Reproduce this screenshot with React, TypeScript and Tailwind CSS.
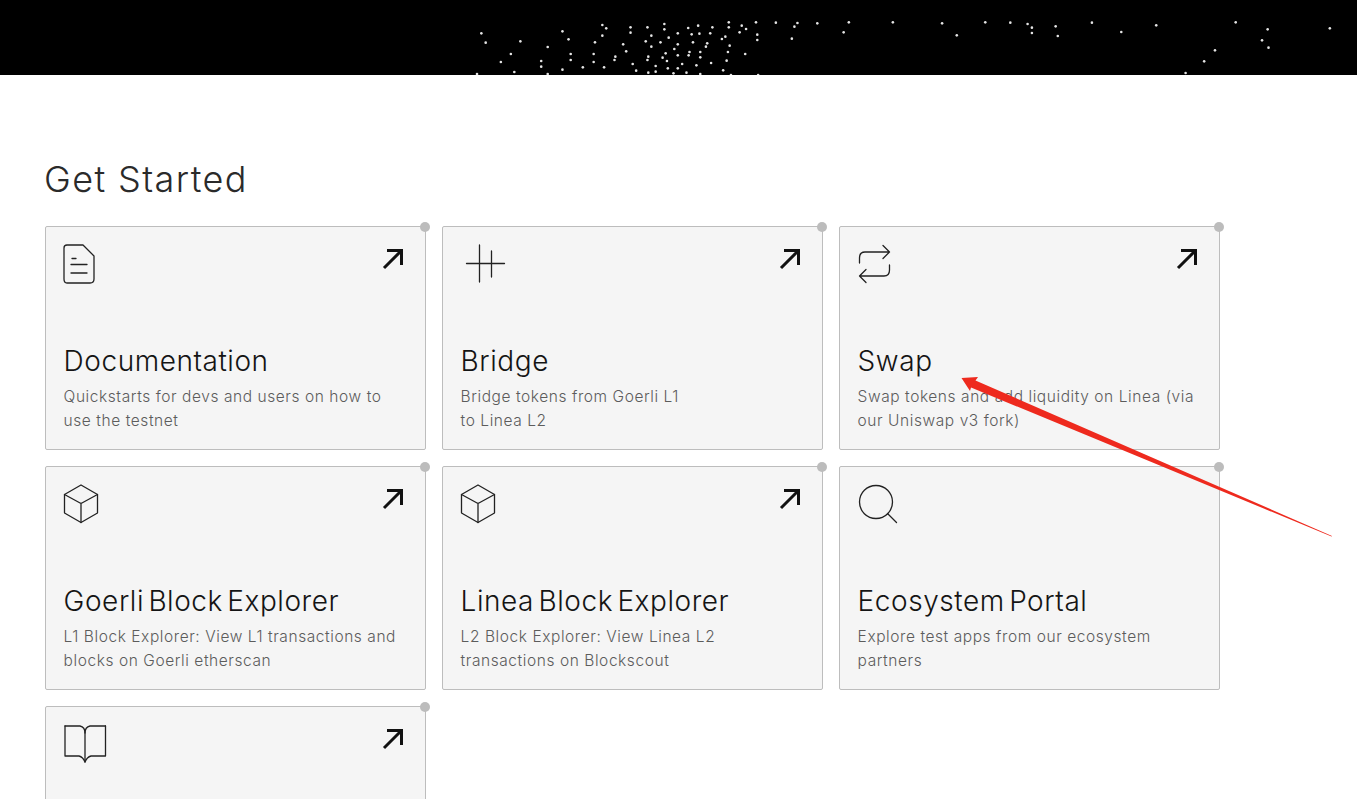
const dots1 = [[1110,100],[1120,128],[1200,124],[1178,162],[1155,186],[1100,222],[1186,216],[1297,94],[1311,118],[1263,141],[1248,183],[1248,200],[1263,222],[1316,162],[1316,180],[1297,209],[1344,202],[1369,162],[1369,186],[1393,202],[1372,127],[1389,75],[1398,85],[1389,107],[1437,133],[1444,154],[1419,170],[1417,180],[1454,82],[1454,98],[1493,82],[1502,107],[1489,124],[1502,140],[1523,127],[1542,113],[1532,72],[1532,88],[1563,100],[1563,133],[1555,147],[1535,160],[1563,166],[1528,173],[1495,170],[1493,180],[1538,183],[1459,192],[1467,212],[1495,218],[1512,215],[1512,198],[1540,205],[1563,205],[1553,220]];
const dots2 = [[19,84],[42,77],[75,82],[113,82],[143,77],[153,87],[27,103],[45,101],[70,100],[138,97],[179,104],[179,120],[105,110],[97,117],[30,127],[63,130],[60,140],[115,137],[22,156],[20,166],[47,156],[47,172],[111,156],[151,162],[108,182],[72,189],[38,196],[5,192],[100,211],[15,218],[47,222],[118,225],[181,225],[113,67],[176,67],[222,68],[265,80],[272,69],[259,116],[318,70],[391,67],[379,97],[493,67],[607,70],[641,106],[707,67],[765,68],[805,72],[815,83],[815,99],[870,79],[875,108],[954,68],[1022,96],[1103,76],[1287,67],[1361,88],[1348,121],[1363,143],[1239,151],[1214,184],[1171,219],[1505,85]];

const stroke = { fill: "none", stroke: "#222", strokeWidth: 1.3, strokeLinecap: "round" as const, strokeLinejoin: "round" as const };

function Doc() {
  return (
    <svg viewBox="63 244 60 42" className="h-[42px] w-[60px] overflow-visible" {...stroke}>
      <path d="M67 245H83L94 256V279Q94 283 90 283H67Q64 283 64 279V248Q64 245 67 245Z" />
      <path d="M72 258.5H76M71 264.5H87M71 273H87" />
    </svg>
  );
}
function Bridge() {
  return (
    <svg viewBox="460 244 60 42" className="h-[42px] w-[60px] overflow-visible" {...stroke}>
      <path d="M479.5 245V282M491.5 251V277M466.5 263.5H504.5" />
    </svg>
  );
}
function Swap() {
  return (
    <svg viewBox="856 244 60 42" className="h-[42px] w-[60px] overflow-visible" {...stroke}>
      <path d="M858.5 263V258Q858.5 252 864 252H888.5M882 245.5L888.5 252L882 258.5" />
      <path d="M888.5 265V270Q888.5 276 883 276H858.5M865 269.5L858.5 276L865 282.5" />
    </svg>
  );
}
function Cube() {
  return (
    <svg viewBox="63 484 60 42" className="h-[42px] w-[60px] overflow-visible" {...stroke}>
      <path d="M81 485L97.5 494.5V513L81 522.5L64.5 513V494.5Z" />
      <path d="M64.5 494.5L81 503.5L97.5 494.5M81 503.5V522.5" />
    </svg>
  );
}
function Search() {
  return (
    <svg viewBox="856 484 60 42" className="h-[42px] w-[60px] overflow-visible" {...stroke}>
      <circle cx="875" cy="502" r="16.5" />
      <path d="M886.5 513.5L895.5 522.5" />
    </svg>
  );
}
function Book() {
  return (
    <svg viewBox="63 724 60 42" className="h-[42px] w-[60px] overflow-visible" {...stroke}>
      <path d="M65 726H80Q85 727 85 733V762" />
      <path d="M105.5 726H90Q85 727 85 733" />
      <path d="M65 726V756H79Q83 757 85 762Q87 757 91 756H105.5V726" />
    </svg>
  );
}
function Arrow() {
  return (
    <svg viewBox="0 0 24 24" className="mt-[2px] h-[24px] w-[24px] overflow-visible" fill="none" stroke="#111" strokeWidth="3">
      <path d="M3 22L20.5 4.5M6 4.5H20.5V19" />
    </svg>
  );
}

function Card({ icon, title, desc, noArrow }: { icon: React.ReactNode; title?: string; desc?: React.ReactNode; noArrow?: boolean }) {
  return (
    <div className="relative flex h-[224px] flex-col rounded-[2px] border border-[#bdbdbd] bg-[#f5f5f5] pb-[16px] pl-[17px] pr-[20px] pt-[17px]">
      <span className="absolute right-[-5px] top-[-5px] h-[10px] w-[10px] rounded-full bg-[#bcbcbc]" />
      <div className="flex items-start justify-between">
        {icon}
        {!noArrow && <Arrow />}
      </div>
      {title && (
        <div className="mt-auto pl-[0.6px]">
          <h3 className="mb-[6px] text-[28px] font-light leading-[36px] tracking-[0.55px] [word-spacing:-4px] text-[#141414]">{title}</h3>
          <p className="text-[15.5px] font-light leading-[24px] tracking-[0.57px] text-[#5c5c5c]">{desc}</p>
        </div>
      )}
    </div>
  );
}

export default function App() {
  return (
    <div className="relative h-screen overflow-hidden bg-white font-['Inter',sans-serif]">
      <div className="h-[75px] bg-black">
        <svg viewBox="0 0 1357 75" className="block h-[75px] w-full" fill="#e4e4e4">
          {dots1.map(([x, y], i) => (
            <circle key={i} cx={x / 2.306} cy={y / 3} r="1.3" />
          ))}
          {dots2.map(([x, y], i) => (
            <circle key={i} cx={680 + x / 2.316} cy={y / 3} r="1.3" />
          ))}
        </svg>
      </div>
      <main className="pl-[45px] pt-[82px]">
        <h1 className="-ml-px mb-[25px] text-[36px] font-light leading-[44px] tracking-[1.4px] text-[#2a2a2a]">Get Started</h1>
        <div className="grid w-[1175px] grid-cols-[381px_381px_381px] gap-4">
          <Card icon={<Doc />} title="Documentation" desc={<>Quickstarts for devs and users on how to<br />use the testnet</>} />
          <Card icon={<Bridge />} title="Bridge" desc={<>Bridge tokens from Goerli L1<br />to Linea L2</>} />
          <Card icon={<Swap />} title="Swap" desc={<>Swap tokens and add liquidity on Linea (via<br />our Uniswap v3 fork)</>} />
          <Card icon={<Cube />} title="Goerli Block Explorer" desc={<>L1 Block Explorer: View L1 transactions and<br />blocks on Goerli etherscan</>} />
          <Card icon={<Cube />} title="Linea Block Explorer" desc={<>L2 Block Explorer: View Linea L2<br />transactions on Blockscout</>} />
          <Card noArrow icon={<Search />} title="Ecosystem Portal" desc={<>Explore test apps from our ecosystem<br />partners</>} />
          <Card icon={<Book />} />
        </div>
      </main>
      <svg viewBox="0 0 1357 799" className="pointer-events-none absolute left-0 top-0 h-[799px] w-[1357px]">
        <path d="M961.5 378L978 377L975.5 380.5L1332 536L1331.5 536.5L971 387.5L970 391Z" fill="#ee2a1e" />
      </svg>
    </div>
  );
}
